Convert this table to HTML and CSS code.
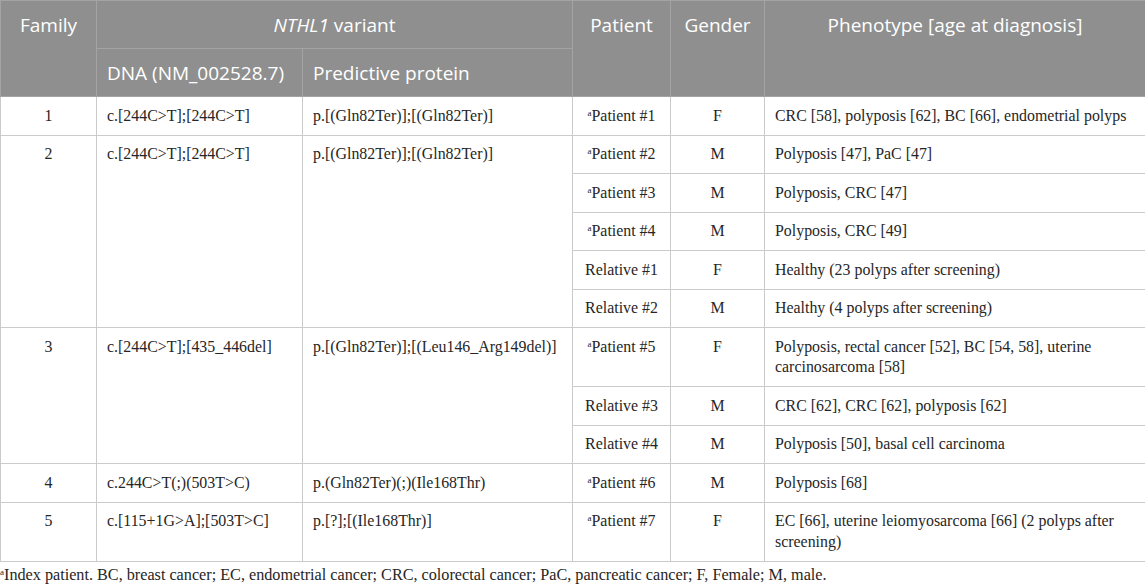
FILE: index.html
```html
<!DOCTYPE html>
<html lang="en">
<head>
<meta charset="utf-8">
<title>NTHL1 variants</title>
<link rel="stylesheet" href="styles.css">
</head>
<body>
<table class="tbl">
  <colgroup>
    <col class="c-fam"><col class="c-dna"><col class="c-prot"><col class="c-pat"><col class="c-gen"><col class="c-phe">
  </colgroup>
  <thead>
    <tr>
      <th rowspan="2">Family</th>
      <th colspan="2"><i>NTHL1</i> variant</th>
      <th rowspan="2">Patient</th>
      <th rowspan="2">Gender</th>
      <th rowspan="2">Phenotype [age at diagnosis]</th>
    </tr>
    <tr>
      <th class="left">DNA (NM_002528.7)</th>
      <th class="left">Predictive protein</th>
    </tr>
  </thead>
  <tbody>
    <tr>
      <td class="ctr">1</td>
      <td>c.[244C&gt;T];[244C&gt;T]</td>
      <td>p.[(Gln82Ter)];[(Gln82Ter)]</td>
      <td class="ctr"><sup class="fn">a</sup>Patient #1</td>
      <td class="ctr">F</td>
      <td>CRC [58], polyposis [62], BC [66], endometrial polyps</td>
    </tr>
    <tr>
      <td class="ctr" rowspan="5">2</td>
      <td rowspan="5">c.[244C&gt;T];[244C&gt;T]</td>
      <td rowspan="5">p.[(Gln82Ter)];[(Gln82Ter)]</td>
      <td class="ctr"><sup class="fn">a</sup>Patient #2</td>
      <td class="ctr">M</td>
      <td>Polyposis [47], PaC [47]</td>
    </tr>
    <tr>
      <td class="ctr"><sup class="fn">a</sup>Patient #3</td>
      <td class="ctr">M</td>
      <td>Polyposis, CRC [47]</td>
    </tr>
    <tr>
      <td class="ctr"><sup class="fn">a</sup>Patient #4</td>
      <td class="ctr">M</td>
      <td>Polyposis, CRC [49]</td>
    </tr>
    <tr>
      <td class="ctr">Relative #1</td>
      <td class="ctr">F</td>
      <td>Healthy (23 polyps after screening)</td>
    </tr>
    <tr>
      <td class="ctr">Relative #2</td>
      <td class="ctr">M</td>
      <td>Healthy (4 polyps after screening)</td>
    </tr>
    <tr>
      <td class="ctr" rowspan="3">3</td>
      <td rowspan="3">c.[244C&gt;T];[435_446del]</td>
      <td rowspan="3">p.[(Gln82Ter)];[(Leu146_Arg149del)]</td>
      <td class="ctr"><sup class="fn">a</sup>Patient #5</td>
      <td class="ctr">F</td>
      <td>Polyposis, rectal cancer [52], BC [54, 58], uterine carcinosarcoma [58]</td>
    </tr>
    <tr>
      <td class="ctr">Relative #3</td>
      <td class="ctr">M</td>
      <td>CRC [62], CRC [62], polyposis [62]</td>
    </tr>
    <tr>
      <td class="ctr">Relative #4</td>
      <td class="ctr">M</td>
      <td>Polyposis [50], basal cell carcinoma</td>
    </tr>
    <tr>
      <td class="ctr">4</td>
      <td>c.244C&gt;T(;)(503T&gt;C)</td>
      <td>p.(Gln82Ter)(;)(Ile168Thr)</td>
      <td class="ctr"><sup class="fn">a</sup>Patient #6</td>
      <td class="ctr">M</td>
      <td>Polyposis [68]</td>
    </tr>
    <tr>
      <td class="ctr">5</td>
      <td>c.[115+1G&gt;A];[503T&gt;C]</td>
      <td>p.[?];[(Ile168Thr)]</td>
      <td class="ctr"><sup class="fn">a</sup>Patient #7</td>
      <td class="ctr">F</td>
      <td>EC [66], uterine leiomyosarcoma [66] (2 polyps after screening)</td>
    </tr>
  </tbody>
</table>
<p class="note"><sup class="fn">a</sup>Index patient. BC, breast cancer; EC, endometrial cancer; CRC, colorectal cancer; PaC, pancreatic cancer; F, Female; M, male.</p>
</body>
</html>
```
FILE: styles.css
```css
html, body {
  margin: 0;
  padding: 0;
  background: #ffffff;
}

.tbl {
  width: 1145px;
  border-collapse: collapse;
  table-layout: fixed;
  font-family: "Liberation Serif", "Times New Roman", serif;
  color: #262626;
}

.c-fam { width: 96px; }
.c-dna { width: 206px; }
.c-prot { width: 270px; }
.c-pat { width: 98px; }
.c-gen { width: 94px; }
.c-phe { width: 381px; }

.tbl th {
  background: #8f8f8f;
  color: #ffffff;
  font-family: "Open Sans", "Noto Sans", sans-serif;
  font-weight: 400;
  font-size: 19px;
  line-height: 24px;
  padding: 12px 10px 11px;
  vertical-align: top;
  text-align: center;
  border: 1px solid #a3a3a3;
}

.tbl th.left {
  text-align: left;
}

.tbl td {
  font-size: 15.9px;
  line-height: 20.5px;
  padding: 8.5px 10px;
  vertical-align: top;
  text-align: left;
  border: 1px solid #cbcbcb;
}

.tbl td.ctr {
  text-align: center;
}

.fn {
  font-size: 9px;
  line-height: 0;
  vertical-align: 0.55em;
}

.note {
  margin: 0;
  padding-top: 3px;
  font-family: "Liberation Serif", "Times New Roman", serif;
  font-size: 16.2px;
  line-height: 20px;
  color: #262626;
}
```
